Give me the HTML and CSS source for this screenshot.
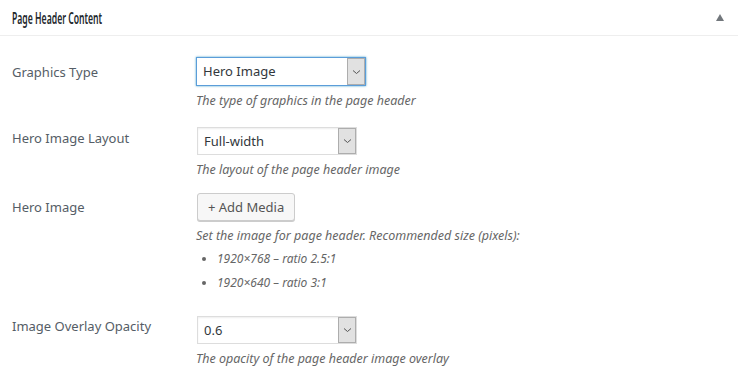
FILE: index.html
```html
<!DOCTYPE html>
<html lang="en">

<head>
    <meta charset="UTF-8">
    <meta name="viewport" content="width=device-width, initial-scale=1.0">
    <title>Page Header Content</title>
    <link rel="stylesheet" href="styles.css">
</head>

<body>
    <div class="postbox">
        <div class="postbox-header">
            <h2>Page Header Content</h2>
            <span class="toggle-arrow"></span>
        </div>

        <div class="inside">
            <div class="field-row row-type">
                <label class="field-label">Graphics Type</label>
                <div class="field-body">
                    <div class="select select-focus select-wide">
                        <span class="select-value">Hero Image</span>
                        <span class="select-arrow"><svg width="9" height="6" viewBox="0 0 9 6"><path d="M1 1.5l3.5 3 3.5-3" fill="none" stroke="#555" stroke-width="1"/></svg></span>
                    </div>
                    <p class="description">The type of graphics in the page header</p>
                </div>
            </div>

            <div class="field-row row-layout">
                <label class="field-label">Hero Image Layout</label>
                <div class="field-body">
                    <div class="select">
                        <span class="select-value">Full-width</span>
                        <span class="select-arrow"><svg width="9" height="6" viewBox="0 0 9 6"><path d="M1 1.5l3.5 3 3.5-3" fill="none" stroke="#555" stroke-width="1"/></svg></span>
                    </div>
                    <p class="description">The layout of the page header image</p>
                </div>
            </div>

            <div class="field-row row-media">
                <label class="field-label">Hero Image</label>
                <div class="field-body">
                    <button type="button" class="button">+ Add Media</button>
                    <p class="description">Set the image for page header. Recommended size (pixels):</p>
                    <ul class="sizes">
                        <li>1920×768 – ratio 2.5:1</li>
                        <li>1920×640 – ratio 3:1</li>
                    </ul>
                </div>
            </div>

            <div class="field-row row-opacity">
                <label class="field-label">Image Overlay Opacity</label>
                <div class="field-body">
                    <div class="select">
                        <span class="select-value">0.6</span>
                        <span class="select-arrow"><svg width="9" height="6" viewBox="0 0 9 6"><path d="M1 1.5l3.5 3 3.5-3" fill="none" stroke="#555" stroke-width="1"/></svg></span>
                    </div>
                    <p class="description">The opacity of the page header image overlay</p>
                </div>
            </div>
        </div>
    </div>
</body>

</html>
```

FILE: styles.css
```css
body {
    margin: 0;
    padding: 0;
    font-family: "Noto Sans", "Open Sans", sans-serif;
    background-color: #ffffff;
    color: #444;
}

.postbox {
    width: 738px;
    height: 380px;
    background: #fff;
}

.postbox-header {
    display: flex;
    align-items: center;
    justify-content: space-between;
    height: 36px;
    padding: 0 12px;
    border-bottom: 1px solid #eeeeee;
    box-sizing: border-box;
}

/* the title font in the screenshot is a narrow face */
.postbox-header h2 {
    margin: 0;
    font-family: "Noto Sans", sans-serif;
    font-size: 16px;
    font-weight: 600;
    color: #23282d;
    transform: scaleX(0.54);
    transform-origin: left center;
}

.toggle-arrow {
    width: 0;
    height: 0;
    margin-right: 2px;
    border-left: 4px solid transparent;
    border-right: 4px solid transparent;
    border-bottom: 7px solid #72777c;
}

.inside {
    padding: 0 12px;
}

.field-row {
    display: flex;
}

.field-label {
    width: 184px;
    flex-shrink: 0;
    font-size: 13px;
    color: #555d66;
    line-height: 20px;
}

.row-type {
    padding-top: 21px;
}

.row-type .field-label {
    padding-top: 5px;
}

.row-layout {
    padding-top: 17px;
}

.row-layout .field-label {
    padding-top: 1px;
}

.row-media {
    padding-top: 14px;
}

.row-media .field-label {
    padding-top: 4px;
}

.row-opacity {
    padding-top: 18px;
}

.row-opacity .field-label {
    padding-top: 0;
}

.field-body {
    display: flex;
    flex-direction: column;
    align-items: flex-start;
}

.select {
    display: flex;
    width: 160px;
    height: 28px;
    border: 1px solid #ddd;
    box-sizing: border-box;
    background: #fff;
    box-shadow: inset 0 1px 2px rgba(0, 0, 0, 0.07);
    margin-left: 1px;
}

.select-wide {
    width: 170px;
    height: 29px;
    margin-left: 0;
}

.select-focus {
    border-color: #5b9dd9;
    box-shadow: 0 0 2px rgba(30, 140, 190, 0.8);
}

.select-value {
    flex: 1;
    padding-left: 6px;
    font-size: 13px;
    line-height: 26px;
    color: #32373c;
}

.select-arrow {
    width: 16px;
    border: 1px solid #adadad;
    background: #e1e1e1;
    display: flex;
    align-items: center;
    justify-content: center;
}

.description {
    margin: 6px 0 0 0;
    font-size: 12.5px;
    font-style: italic;
    color: #666;
    line-height: 18px;
}

.button {
    height: 28px;
    padding: 0 10px;
    margin-left: 1px;
    font-family: inherit;
    font-size: 13px;
    color: #555;
    background: #f7f7f7;
    border: 1px solid #ccc;
    border-radius: 3px;
    box-shadow: 0 1px 0 #ccc;
    cursor: pointer;
}

.sizes {
    margin: 5px 0 0 0;
    padding-left: 21px;
    font-size: 12px;
    font-style: italic;
    color: #666;
}

.sizes li {
    line-height: 18px;
    margin-bottom: 6px;
}
```
